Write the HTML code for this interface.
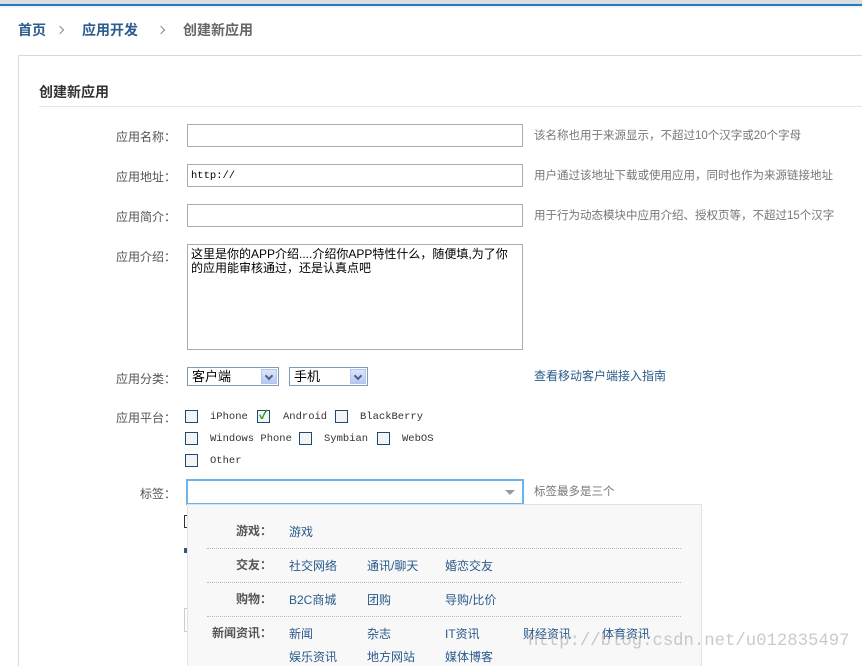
<!DOCTYPE html>
<html><head><meta charset="utf-8"><style>
*{margin:0;padding:0;box-sizing:border-box}
html,body{width:862px;height:666px;overflow:hidden}
body{background:#fff;position:relative;font-family:"Liberation Sans","Noto Sans CJK SC",sans-serif;font-size:12px;color:#555}
.a{position:absolute;white-space:nowrap}
.lab{position:absolute;width:120px;left:56px;text-align:right;color:#555;font-size:12px}
.inp{position:absolute;left:187px;width:336px;height:23px;border:1px solid #a5acb2;background:#fff}
.hint{position:absolute;left:534px;color:#777;font-size:11.5px;white-space:nowrap}
.cb{position:absolute;width:13px;height:13px;border:1px solid #1c4a75;background:#f4f4f4}
.mono{position:absolute;font-family:"Liberation Mono",monospace;font-size:10.5px;color:#333;white-space:nowrap}
.sel{position:absolute;height:19px;border:1px solid #7f9db9;background:#fff;font-size:13px;color:#000;padding-left:4px;line-height:17px}
.sel i{position:absolute;right:1px;top:1px;width:16px;height:15px;background:linear-gradient(#dbe6fb,#b5c8f3);border:1px solid #b3c6ef}
.sel i:after{content:"";position:absolute;left:4px;top:3px;width:4px;height:4px;border-right:2px solid #4d6185;border-bottom:2px solid #4d6185;transform:rotate(45deg)}
.dl{position:absolute;left:207px;width:474px;border-top:1px dotted #bbb}
.ck{position:absolute;width:65px;left:207px;text-align:right;font-weight:bold;color:#555;font-size:12px}
.it{position:absolute;color:#2a5a8c;font-size:12px;white-space:nowrap}
.arr{position:absolute;width:6px;height:6px;border-top:1px solid #888;border-right:1px solid #888;transform:rotate(45deg)}
</style></head><body>
<div class="a" style="left:0;top:0;width:862px;height:4px;background:#d9dde0"></div>
<div class="a" style="left:0;top:4px;width:862px;height:2px;background:#1e7cc4"></div>
<div class="a" style="left:0;top:6px;width:862px;height:3px;background:linear-gradient(#eee,#fff)"></div>
<div class="a" style="left:18px;top:20px;font-size:14px;font-weight:bold;color:#2c5d8f">首页</div>
<div class="arr" style="left:57px;top:27px"></div>
<div class="a" style="left:82px;top:20px;font-size:14px;font-weight:bold;color:#2c5d8f">应用开发</div>
<div class="arr" style="left:158px;top:27px"></div>
<div class="a" style="left:183px;top:20px;font-size:14px;font-weight:bold;color:#666">创建新应用</div>
<div class="a" style="left:18px;top:55px;width:844px;height:611px;border-left:1px solid #d8d8d8;border-top:1px solid #d8d8d8"></div>
<div class="a" style="left:39px;top:82px;font-size:14px;font-weight:bold;color:#333">创建新应用</div>
<div class="a" style="left:39px;top:106px;width:823px;height:1px;background:#e6e6e6"></div>

<div class="lab" style="top:128px">应用名称：</div><div class="inp" style="top:124px"></div>
<div class="hint" style="top:127px">该名称也用于来源显示，不超过10个汉字或20个字母</div>
<div class="lab" style="top:168px">应用地址：</div><div class="inp" style="top:164px"><span class="mono" style="left:3px;top:5px;color:#000">http://</span></div>
<div class="hint" style="top:167px">用户通过该地址下载或使用应用，同时也作为来源链接地址</div>
<div class="lab" style="top:208px">应用简介：</div><div class="inp" style="top:204px"></div>
<div class="hint" style="top:207px">用于行为动态模块中应用介绍、授权页等，不超过15个汉字</div>
<div class="lab" style="top:248px">应用介绍：</div>
<div class="inp" style="top:244px;height:106px;padding:2px 3px;font-size:12px;color:#000;line-height:14px;white-space:normal">这里是你的APP介绍....介绍你APP特性什么，随便填,为了你的应用能审核通过，还是认真点吧</div>

<div class="lab" style="top:370px">应用分类：</div>
<div class="sel" style="left:187px;top:367px;width:92px">客户端<i></i></div>
<div class="sel" style="left:289px;top:367px;width:79px">手机<i></i></div>
<div class="a" style="left:534px;top:367px;color:#2a5a8c">查看移动客户端接入指南</div>

<div class="lab" style="top:409px">应用平台：</div>
<div class="cb" style="left:185px;top:410px"></div><div class="mono" style="left:210px;top:411px">iPhone</div>
<div class="cb" style="left:257px;top:410px"></div><div class="a" style="left:259px;top:406px;color:#1a9a1a;font-size:12px;font-weight:bold">✓</div><div class="mono" style="left:283px;top:411px">Android</div>
<div class="cb" style="left:335px;top:410px"></div><div class="mono" style="left:360px;top:411px">BlackBerry</div>
<div class="cb" style="left:185px;top:432px"></div><div class="mono" style="left:210px;top:433px">Windows Phone</div>
<div class="cb" style="left:299px;top:432px"></div><div class="mono" style="left:324px;top:433px">Symbian</div>
<div class="cb" style="left:377px;top:432px"></div><div class="mono" style="left:402px;top:433px">WebOS</div>
<div class="cb" style="left:185px;top:454px"></div><div class="mono" style="left:210px;top:455px">Other</div>

<div class="lab" style="top:485px">标签：</div>
<div class="a" style="left:186px;top:479px;width:338px;height:26px;border:2px solid #6fb3e8;background:#fff"></div>
<div class="a" style="left:505px;top:490px;border-left:5px solid transparent;border-right:5px solid transparent;border-top:5px solid #999"></div>
<div class="hint" style="top:483px">标签最多是三个</div>
<div class="a" style="left:184px;top:515px;width:4px;height:13px;border:1px solid #333"></div>
<div class="a" style="left:184px;top:548px;width:3px;height:5px;background:#2a5a8c"></div>
<div class="a" style="left:184px;top:608px;width:4px;height:24px;border:1px solid #ccc"></div>

<div class="a" style="left:187px;top:504px;width:515px;height:162px;background:#f8f8f8;border:1px solid #e2e2e2;border-bottom:none"></div>
<div class="ck" style="top:522px">游戏：</div><div class="it" style="left:289px;top:523px">游戏</div>
<div class="dl" style="top:548px"></div>
<div class="ck" style="top:556px">交友：</div>
<div class="it" style="left:289px;top:557px">社交网络</div><div class="it" style="left:367px;top:557px">通讯/聊天</div><div class="it" style="left:445px;top:557px">婚恋交友</div>
<div class="dl" style="top:582px"></div>
<div class="ck" style="top:590px">购物：</div>
<div class="it" style="left:289px;top:591px">B2C商城</div><div class="it" style="left:367px;top:591px">团购</div><div class="it" style="left:445px;top:591px">导购/比价</div>
<div class="dl" style="top:616px"></div>
<div class="ck" style="top:624px">新闻资讯：</div>
<div class="it" style="left:289px;top:625px">新闻</div><div class="it" style="left:367px;top:625px">杂志</div><div class="it" style="left:445px;top:625px">IT资讯</div><div class="it" style="left:523px;top:625px">财经资讯</div><div class="it" style="left:602px;top:625px">体育资讯</div>
<div class="it" style="left:289px;top:648px">娱乐资讯</div><div class="it" style="left:367px;top:648px">地方网站</div><div class="it" style="left:445px;top:648px">媒体博客</div>
<div class="a" style="left:528px;top:632px;font-family:'Liberation Mono',monospace;font-size:17.3px;color:rgba(150,150,150,0.5)">http://blog.csdn.net/u012835497</div>
</body></html>
